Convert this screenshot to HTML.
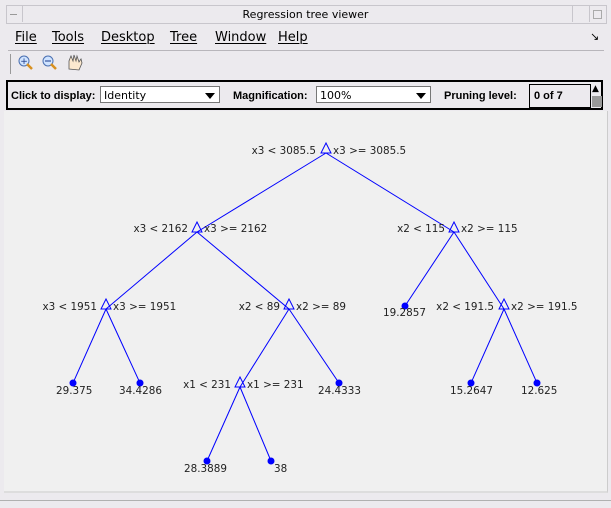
<!DOCTYPE html>
<html><head><style>
body{margin:0;width:611px;height:508px;background:#eceaee;font-family:"DejaVu Sans","Liberation Sans",sans-serif;position:relative;overflow:hidden}
.abs{position:absolute}
.menu span{position:absolute;top:30px;font-size:13px;color:#000;text-decoration:underline;text-decoration-thickness:1px;text-underline-offset:2px}
.lbl{font-weight:bold;font-size:11px;position:absolute;top:90px;font-family:"Liberation Sans",sans-serif}
.sel{position:absolute;top:86px;height:17px;background:#fff;border:1px solid #777;font-size:11px;line-height:17px;padding-left:3px;box-sizing:border-box}
.sel i{position:absolute;right:4px;top:6px;width:0;height:0;border-left:5px solid transparent;border-right:5px solid transparent;border-top:6px solid #000}
</style></head><body>
<div class="abs" style="left:6px;top:5px;width:599px;height:17px;border:1px solid #c8c6cc;background:#eceaee"></div>
<div class="abs" style="left:6px;top:5px;width:16px;height:17px;border-right:1px solid #c8c6cc"></div>
<div class="abs" style="left:10px;top:14px;width:7px;height:1px;background:#999"></div>
<div class="abs" style="left:572px;top:5px;width:16px;height:17px;border-left:1px solid #c8c6cc;border-right:1px solid #c8c6cc"></div>
<div class="abs" style="left:593px;top:10px;width:7px;height:7px;border:1px solid #aaa"></div>
<div class="abs" style="left:0;top:8px;width:611px;text-align:center;font-size:11px">Regression tree viewer</div>
<div class="menu">
<span style="left:15px">File</span><span style="left:52px">Tools</span><span style="left:101px">Desktop</span><span style="left:170px">Tree</span><span style="left:215px">Window</span><span style="left:278px">Help</span>
</div>
<div class="abs" style="left:590px;top:30px;font-size:11px">↘</div>
<div class="abs" style="left:8px;top:50px;width:596px;height:1px;background:#b8b6bb"></div>
<div class="abs" style="left:10px;top:54px;width:1px;height:20px;background:#999"></div>
<svg class="abs" style="left:16px;top:53px" width="80" height="22">
<circle cx="8" cy="8" r="5" fill="#cfe3ff" stroke="#4a6fb0"/><line x1="11" y1="11" x2="16" y2="16" stroke="#d89020" stroke-width="2.5"/><text x="8" y="11" font-size="9" text-anchor="middle" fill="#1a3a8a">+</text>
<circle cx="32" cy="8" r="5" fill="#cfe3ff" stroke="#4a6fb0"/><line x1="35" y1="11" x2="40" y2="16" stroke="#d89020" stroke-width="2.5"/><line x1="29" y1="8" x2="35" y2="8" stroke="#1a3a8a"/>
<path d="M53 16 L53 8 L55 3 L57 8 L58 2 L60 8 L61 3 L63 9 L65 6 L66 10 L63 17 Z" fill="#fde9cf" stroke="#555" stroke-width=".8"/>
</svg>
<div class="abs" style="left:6px;top:80px;width:597px;height:30px;border:2px solid #000;box-sizing:border-box;background:#eceaee"></div>
<span class="lbl" style="left:11px">Click to display:</span>
<div class="sel" style="left:100px;width:120px">Identity<i></i></div>
<span class="lbl" style="left:233px">Magnification:</span>
<div class="sel" style="left:316px;width:115px">100%<i></i></div>
<span class="lbl" style="left:444px">Pruning level:</span>
<div class="abs" style="left:529px;top:84px;width:62px;height:24px;border:1px solid #000;box-sizing:border-box;font-weight:bold;font-size:11px;line-height:22px;padding-left:4px;font-family:'Liberation Sans',sans-serif">0 of 7</div>
<div class="abs" style="left:592px;top:84px;width:10px;height:11px;font-size:9px;line-height:11px">▲</div>
<div class="abs" style="left:592px;top:96px;width:10px;height:11px;background:#999"></div>
<div class="abs" style="left:4px;top:111px;width:603px;height:380px;background:#f0f0f0;border-right:1px solid #ccc;border-bottom:2px solid #ddd"></div>
<div class="abs" style="left:0;top:500px;width:611px;height:1px;background:#b0b0b0"></div>
<svg class="abs" style="left:0;top:0" width="611" height="508" font-family="DejaVu Sans, sans-serif" font-size="10.4" fill="#222">
<g stroke="#0000ff" stroke-width="1" fill="none">
<line x1="326" y1="153" x2="197" y2="232"/><line x1="326" y1="153" x2="454" y2="232"/>
<line x1="197" y1="232" x2="106" y2="309"/><line x1="197" y1="232" x2="289" y2="309"/>
<line x1="454" y1="232" x2="405" y2="306"/><line x1="454" y1="232" x2="504" y2="309"/>
<line x1="106" y1="309" x2="73" y2="383"/><line x1="106" y1="309" x2="140" y2="383"/>
<line x1="289" y1="309" x2="240" y2="387"/><line x1="289" y1="309" x2="339" y2="383"/>
<line x1="504" y1="309" x2="471" y2="383"/><line x1="504" y1="309" x2="537" y2="383"/>
<line x1="240" y1="387" x2="207" y2="461"/><line x1="240" y1="387" x2="271" y2="461"/>
<path d="M326 143 L331 153 L321 153 Z"/><path d="M197 222 L202 232 L192 232 Z"/><path d="M454 222 L459 232 L449 232 Z"/>
<path d="M106 299 L111 309 L101 309 Z"/><path d="M289 299 L294 309 L284 309 Z"/><path d="M504 299 L509 309 L499 309 Z"/>
<path d="M240 377 L245 387 L235 387 Z"/>
</g>
<g fill="#0000ff">
<circle cx="405" cy="306" r="3.5"/><circle cx="73" cy="383" r="3.5"/><circle cx="140" cy="383" r="3.5"/><circle cx="339" cy="383" r="3.5"/>
<circle cx="471" cy="383" r="3.5"/><circle cx="537" cy="383" r="3.5"/><circle cx="207" cy="461" r="3.5"/><circle cx="271" cy="461" r="3.5"/>
</g>
<g text-anchor="end">
<text x="316" y="154">x3 &lt; 3085.5</text><text x="188" y="232">x3 &lt; 2162</text><text x="445" y="232">x2 &lt; 115</text>
<text x="97" y="310">x3 &lt; 1951</text><text x="280" y="310">x2 &lt; 89</text><text x="494" y="310">x2 &lt; 191.5</text>
<text x="231" y="388">x1 &lt; 231</text>
</g>
<text x="333" y="154">x3 &gt;= 3085.5</text><text x="204" y="232">x3 &gt;= 2162</text><text x="461" y="232">x2 &gt;= 115</text>
<text x="113" y="310">x3 &gt;= 1951</text><text x="296" y="310">x2 &gt;= 89</text><text x="511" y="310">x2 &gt;= 191.5</text>
<text x="247" y="388">x1 &gt;= 231</text>
<text x="383" y="316">19.2857</text><text x="56" y="394">29.375</text><text x="119" y="394">34.4286</text>
<text x="318" y="394">24.4333</text><text x="450" y="394">15.2647</text><text x="521" y="394">12.625</text>
<text x="184" y="472">28.3889</text><text x="274" y="472">38</text>
</svg>
</body></html>
